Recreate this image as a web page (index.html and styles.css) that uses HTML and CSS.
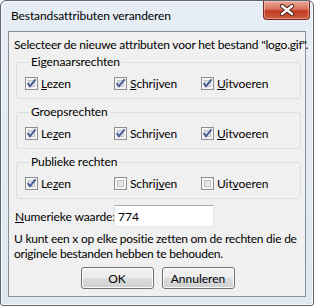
FILE: index.html
```html
<!DOCTYPE html>
<html lang="nl">
<head>
    <meta charset="UTF-8">
    <title>Bestandsattributen veranderen</title>
    <link rel="stylesheet" href="styles.css">
</head>
<body>
    <div class="window">
        <div class="titlebar">
            <span class="title">Bestandsattributen veranderen</span>
            <button class="close" title="Sluiten">
                <svg width="16" height="12" viewBox="0 0 16 12">
                    <path d="M3 2 L13 10 M13 2 L3 10" stroke="#4b1b14" stroke-width="4.2" stroke-linecap="round"/>
                    <path d="M3 2 L13 10 M13 2 L3 10" stroke="#ffffff" stroke-width="2.4" stroke-linecap="round"/>
                </svg>
            </button>
        </div>
        <div class="client">
            <p class="intro">Selecteer de nieuwe attributen voor het bestand "logo.gif".</p>

            <!-- Eigenaar -->
            <fieldset class="group">
                <legend>Eigenaarsrechten</legend>
                <label class="check"><span class="box checked"><svg width="11" height="11" viewBox="0 0 11 11"><path d="M1.6 5.2 L4 8.2 L9.6 1.4" /></svg></span><span><u>L</u>ezen</span></label>
                <label class="check"><span class="box checked"><svg width="11" height="11" viewBox="0 0 11 11"><path d="M1.6 5.2 L4 8.2 L9.6 1.4" /></svg></span><span><u>S</u>chrijven</span></label>
                <label class="check"><span class="box checked"><svg width="11" height="11" viewBox="0 0 11 11"><path d="M1.6 5.2 L4 8.2 L9.6 1.4" /></svg></span><span><u>U</u>itvoeren</span></label>
            </fieldset>

            <!-- Groep -->
            <fieldset class="group">
                <legend>Groepsrechten</legend>
                <label class="check"><span class="box checked"><svg width="11" height="11" viewBox="0 0 11 11"><path d="M1.6 5.2 L4 8.2 L9.6 1.4" /></svg></span><span>Le<u>z</u>en</span></label>
                <label class="check"><span class="box checked"><svg width="11" height="11" viewBox="0 0 11 11"><path d="M1.6 5.2 L4 8.2 L9.6 1.4" /></svg></span><span>Schri<u>j</u>ven</span></label>
                <label class="check"><span class="box checked"><svg width="11" height="11" viewBox="0 0 11 11"><path d="M1.6 5.2 L4 8.2 L9.6 1.4" /></svg></span><span><u>U</u>itvoeren</span></label>
            </fieldset>

            <!-- Publiek -->
            <fieldset class="group">
                <legend>Publieke rechten</legend>
                <label class="check"><span class="box checked"><svg width="11" height="11" viewBox="0 0 11 11"><path d="M1.6 5.2 L4 8.2 L9.6 1.4" /></svg></span><span>Le<u>z</u>en</span></label>
                <label class="check"><span class="box"></span><span>Schrij<u>v</u>en</span></label>
                <label class="check"><span class="box"></span><span>Uit<u>v</u>oeren</span></label>
            </fieldset>

            <div class="numeric">
                <label for="num"><u>N</u>umerieke waarde:</label>
                <input id="num" type="text" value="774">
            </div>

            <p class="note">U kunt een x op elke positie zetten om de rechten die de<br>originele bestanden hebben te behouden.</p>

            <div class="buttons">
                <button class="btn">OK</button>
                <button class="btn">Annuleren</button>
            </div>
        </div>
    </div>
</body>
</html>
```

FILE: styles.css
```css
* {
    box-sizing: border-box;
}
html, body {
    margin: 0;
    padding: 0;
}
body {
    background-color: #FFFFFF;
    font-family: Lato, "Noto Sans", sans-serif;
    font-size: 12px;
    letter-spacing: -0.1px;
    color: #000;
}
.window {
    width: 314px;
    height: 306px;
    border: 1px solid #5e6670;
    border-radius: 6px 6px 3px 3px;
    background: linear-gradient(#e6edf5, #dfe7f0);
    box-shadow: inset 0 0 0 1px #f7f9fc;
    display: flex;
    flex-direction: column;
    padding: 0 7px 8px;
}
.titlebar {
    height: 30px;
    display: flex;
    align-items: flex-start;
    margin-right: -4px;
}
.title {
    margin: 7px 0 0 3px;
    line-height: 15px;
}
.close {
    margin-left: auto;
    width: 47px;
    height: 19px;
    padding: 0;
    border: 1px solid #7a2a1c;
    border-top: none;
    border-radius: 0 0 4px 4px;
    background: linear-gradient(#e9a797 0%, #d9735f 45%, #c23b22 55%, #cf5c40 100%);
    box-shadow: inset 0 0 0 1px rgba(255, 255, 255, 0.35);
    display: flex;
    align-items: center;
    justify-content: center;
}
.client {
    flex: 1;
    border: 1px solid #8a9098;
    background: #f0f0f0;
    padding: 0 4px 0 5px;
    display: flex;
    flex-direction: column;
}
.intro {
    margin: 5px 0 0;
    line-height: 15px;
    white-space: nowrap;
    letter-spacing: -0.2px;
}
.group {
    margin: 3px 0 0 2px;
    border: 1px solid #d5dfe5;
    border-radius: 3px;
    padding: 7px 0 7px 8px;
    display: grid;
    grid-template-columns: 89px 87px 1fr;
}
.group + .group {
    margin-top: 6px;
}
.group legend {
    padding: 0 2px;
    margin-left: 4px;
    line-height: 14px;
}
.check {
    display: flex;
    align-items: center;
    gap: 3px;
    line-height: 15px;
}
.box {
    width: 13px;
    height: 13px;
    border: 1px solid #8e8f8f;
    background: linear-gradient(135deg, #cdd1d7, #f7f7f8);
    box-shadow: inset 0 0 0 2px #f4f4f4, inset 0 0 0 3px #c3c7cc;
    display: grid;
    place-items: center;
}
.box svg path {
    fill: none;
    stroke: #4b5d96;
    stroke-width: 1.9;
}
.numeric {
    margin: 6px 0 0 1px;
    display: flex;
    align-items: center;
}
.numeric label {
    flex: none;
    width: 99px;
    white-space: nowrap;
}
.numeric input {
    flex: none;
    width: 100px;
    height: 22px;
    border: 1px solid #e3e9ef;
    border-top-color: #abadb3;
    border-left-color: #dbdfe6;
    border-radius: 1px;
    background: #fff;
    padding: 0 3px;
    font: inherit;
    color: #000;
}
.note {
    margin: 4px 0 0;
    line-height: 15px;
    white-space: nowrap;
    letter-spacing: -0.25px;
}
.buttons {
    margin-top: 6px;
    display: flex;
    justify-content: center;
    gap: 8px;
}
.btn {
    width: 73px;
    height: 22px;
    border: 1px solid #707070;
    border-radius: 3px;
    background: linear-gradient(#f2f2f2 0%, #ebebeb 50%, #dddddd 50%, #cfcfcf 100%);
    box-shadow: inset 0 0 0 1px #fcfcfc;
    font: inherit;
    color: #000;
    padding: 0;
}
```
